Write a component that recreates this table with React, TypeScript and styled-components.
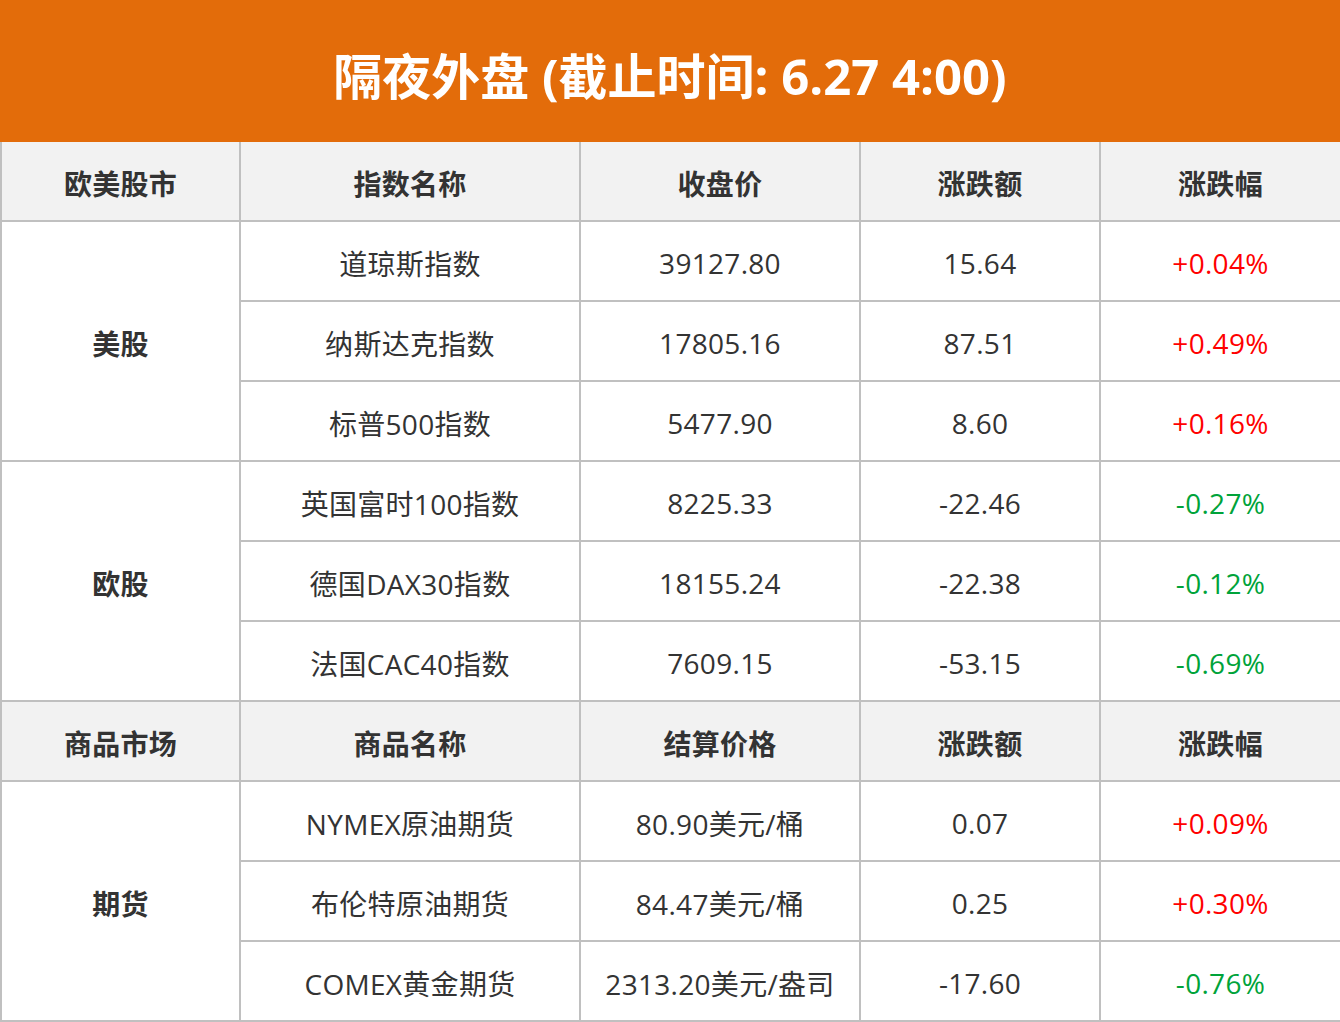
import styled, { createGlobalStyle } from "styled-components";

const GlobalStyle = createGlobalStyle`
  html, body {
    margin: 0;
    padding: 0;
    background: #ffffff;
  }
  body {
    font-family: "Open Sans", "Noto Sans CJK SC", sans-serif;
  }
`;

type Trend = "up" | "down";

type Row = {
  name: string;
  price: string;
  change: string;
  pct: string;
  trend: Trend;
};

type Group = {
  label: string;
  rows: Row[];
};

type Section = {
  head: [string, string, string, string, string];
  groups: Group[];
};

const columnWidths = [239, 340, 280, 240, 241];

const sections: Section[] = [
  {
    head: ["欧美股市", "指数名称", "收盘价", "涨跌额", "涨跌幅"],
    groups: [
      {
        label: "美股",
        rows: [
          { name: "道琼斯指数", price: "39127.80", change: "15.64", pct: "+0.04%", trend: "up" },
          { name: "纳斯达克指数", price: "17805.16", change: "87.51", pct: "+0.49%", trend: "up" },
          { name: "标普500指数", price: "5477.90", change: "8.60", pct: "+0.16%", trend: "up" },
        ],
      },
      {
        label: "欧股",
        rows: [
          { name: "英国富时100指数", price: "8225.33", change: "-22.46", pct: "-0.27%", trend: "down" },
          { name: "德国DAX30指数", price: "18155.24", change: "-22.38", pct: "-0.12%", trend: "down" },
          { name: "法国CAC40指数", price: "7609.15", change: "-53.15", pct: "-0.69%", trend: "down" },
        ],
      },
    ],
  },
  {
    head: ["商品市场", "商品名称", "结算价格", "涨跌额", "涨跌幅"],
    groups: [
      {
        label: "期货",
        rows: [
          { name: "NYMEX原油期货", price: "80.90美元/桶", change: "0.07", pct: "+0.09%", trend: "up" },
          { name: "布伦特原油期货", price: "84.47美元/桶", change: "0.25", pct: "+0.30%", trend: "up" },
          { name: "COMEX黄金期货", price: "2313.20美元/盎司", change: "-17.60", pct: "-0.76%", trend: "down" },
        ],
      },
    ],
  },
];

export default function App() {
  return (
    <>
      <GlobalStyle />
      <Page>
        <Banner>隔夜外盘 (截止时间: 6.27 4:00)</Banner>
        <Table>
          <colgroup>
            {columnWidths.map((w, i) => (
              <Col key={i} $w={w} />
            ))}
          </colgroup>
          {sections.map((section, s) => (
            <tbody key={section.head[0]}>
              <HeadRow $first={s === 0}>
                {section.head.map((h) => (
                  <HeadCell key={h}>{h}</HeadCell>
                ))}
              </HeadRow>
              {section.groups.map((group) =>
                group.rows.map((row, i) => (
                  <tr key={row.name}>
                    {i === 0 && <GroupCell rowSpan={group.rows.length}>{group.label}</GroupCell>}
                    <Cell>{row.name}</Cell>
                    <Cell>{row.price}</Cell>
                    <Cell>{row.change}</Cell>
                    <Cell $trend={row.trend}>{row.pct}</Cell>
                  </tr>
                ))
              )}
            </tbody>
          ))}
        </Table>
      </Page>
    </>
  );
}

const Page = styled.div`
  width: 1340px;
  display: flex;
  flex-direction: column;
`;

const Banner = styled.div`
  height: 142px;
  background-color: #e36c0a;
  color: #ffffff;

  display: flex;
  align-items: center;
  justify-content: center;

  font-size: 49px;
  font-weight: 700;
  padding-top: 4px;
  box-sizing: border-box;
`;

const Table = styled.table`
  width: 1340px;
  border-collapse: collapse;
  table-layout: fixed;
`;

const Col = styled.col<{ $w: number }>`
  width: ${({ $w }) => $w}px;
`;

const Cell = styled.td<{ $trend?: Trend }>`
  height: 75px;
  padding: 3px 0 0 0;
  border: 2px solid #c0c0c0;
  text-align: center;
  vertical-align: middle;

  font-size: 28px;
  letter-spacing: 0.3px;
  color: ${({ $trend }) =>
    $trend === "up" ? "#ff0000" : $trend === "down" ? "#00a33a" : "#333333"};
`;

const HeadRow = styled.tr<{ $first: boolean }>`
  & > td {
    border-top: ${({ $first }) => ($first ? "none" : "2px solid #c0c0c0")};
  }
`;

const HeadCell = styled(Cell)`
  background-color: #f2f2f2;
  font-weight: 700;
  color: #333333;
`;

const GroupCell = styled(Cell)`
  font-weight: 700;
`;
